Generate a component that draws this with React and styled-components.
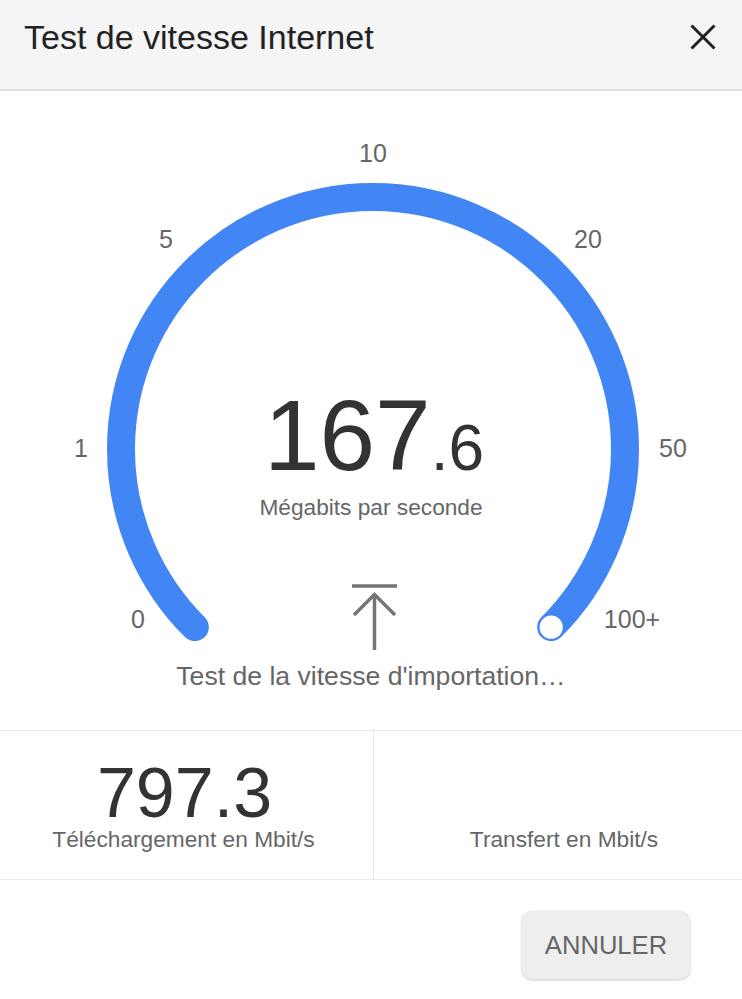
import React from "react";
import styled, { createGlobalStyle } from "styled-components";

const Global = createGlobalStyle`
  html, body { margin: 0; padding: 0; background: #ffffff; }
  body { font-family: "Liberation Sans", Arial, sans-serif; }
`;

const Dialog = styled.div`
  width: 742px;
  background: #ffffff;
  font-family: "Liberation Sans", Arial, sans-serif;
`;

const Header = styled.header`
  box-sizing: border-box;
  height: 91px;
  background: #f5f5f5;
  border-bottom: 2px solid #e2e2e2;
  display: flex;
  align-items: flex-start;
  justify-content: space-between;
  padding: 17px 24px 0 24px;
`;

const Title = styled.h1`
  margin: 0;
  font-size: 34px;
  line-height: 40px;
  font-weight: 400;
  color: #222222;
`;

const CloseButton = styled.button`
  border: none;
  background: transparent;
  padding: 0;
  margin-top: 7px;
  margin-right: 2px;
  width: 26px;
  height: 26px;
  cursor: pointer;
  display: flex;
`;

const GaugeSection = styled.section`
  position: relative;
  display: flex;
  flex-direction: column;
  align-items: center;
  padding-bottom: 39px;
`;

const GaugeSvg = styled.svg`
  display: block;
  width: 742px;
  height: 570px;
`;

const Reading = styled.div`
  position: absolute;
  top: 294px;
  left: 0;
  right: 0;
  display: flex;
  flex-direction: column;
  align-items: center;
`;

const Value = styled.div`
  color: #333333;
  font-size: 100px;
  line-height: 100px;
  height: 100px;
  white-space: nowrap;
  margin-left: 6px;
`;

const Decimal = styled.span`
  font-size: 64px;
`;

const Unit = styled.div`
  margin-top: 9px;
  font-size: 22.7px;
  line-height: 26px;
  color: #666666;
`;

const Status = styled.div`
  font-size: 26.6px;
  line-height: 30px;
  color: #666666;
`;

const Stats = styled.div`
  display: grid;
  grid-template-columns: 373px 1fr;
  border-top: 1px solid #e8e8e8;
  border-bottom: 1px solid #e8e8e8;
`;

const StatCell = styled.div`
  display: flex;
  flex-direction: column;
  align-items: center;
  padding: 32px 0 27px 0;
  border-left: ${(p) => (p.$divider ? "1px solid #e8e8e8" : "none")};
`;

const StatValue = styled.div`
  font-size: 70px;
  line-height: 60px;
  height: 60px;
  color: #333333;
  margin-left: -4px;
`;

const StatLabel = styled.div`
  margin-top: 3px;
  font-size: 22.7px;
  line-height: 26px;
  color: #666666;
  transform: translateX(${(p) => p.$shift || 0}px);
`;

const Footer = styled.footer`
  display: flex;
  justify-content: flex-end;
  padding: 31px 52px 19px 0;
`;

const CancelButton = styled.button`
  width: 168px;
  height: 68px;
  border: none;
  border-radius: 10px;
  background: #eeeeee;
  box-shadow: 0 1px 3px rgba(0, 0, 0, 0.22);
  font-family: "Liberation Sans", Arial, sans-serif;
  font-size: 25.6px;
  color: #666666;
  cursor: pointer;
`;

const BLUE = "#4285f4";
const cx = 373;
const cy = 358;
const r = 252;
const a = r * Math.SQRT1_2;

const labels = [
  { t: "10", x: 373, y: 62 },
  { t: "5", x: 166, y: 148 },
  { t: "20", x: 588, y: 148 },
  { t: "1", x: 81, y: 357 },
  { t: "50", x: 673, y: 357 },
  { t: "0", x: 138, y: 528 },
  { t: "100+", x: 632, y: 528 },
];

export default function App() {
  return (
    <Dialog>
      <Global />
      <Header>
        <Title>Test de vitesse Internet</Title>
        <CloseButton aria-label="Fermer">
          <svg width="26" height="26" viewBox="0 0 26 26">
            <path d="M1.5 1.5 L24.5 24.5 M24.5 1.5 L1.5 24.5" stroke="#222" strokeWidth="3" fill="none" />
          </svg>
        </CloseButton>
      </Header>
      <GaugeSection>
        <GaugeSvg viewBox="0 0 742 570">
          <path
            d={`M ${cx - a} ${cy + a} A ${r} ${r} 0 1 1 ${cx + a} ${cy + a}`}
            stroke={BLUE}
            strokeWidth="28"
            strokeLinecap="round"
            fill="none"
          />
          <circle cx={cx + a} cy={cy + a} r="12.5" fill="#ffffff" stroke={BLUE} strokeWidth="1.8" />
          {labels.map((l) => (
            <text
              key={l.t}
              x={l.x}
              y={l.y}
              textAnchor="middle"
              dominantBaseline="central"
              fontFamily="Liberation Sans, Arial, sans-serif"
              fontSize="25"
              fill="#666666"
            >
              {l.t}
            </text>
          ))}
          <g stroke="#757575" strokeWidth="3.5" fill="none">
            <path d="M352 495 L397 495" />
            <path d="M374.5 503 L374.5 559" />
            <path d="M354 524 L374.5 503.5 L395 524" />
          </g>
        </GaugeSvg>
        <Reading>
          <Value>
            167<Decimal>.6</Decimal>
          </Value>
          <Unit>Mégabits par seconde</Unit>
        </Reading>
        <Status>Test de la vitesse d'importation…</Status>
      </GaugeSection>
      <Stats>
        <StatCell>
          <StatValue>797.3</StatValue>
          <StatLabel $shift={-3}>Téléchargement en Mbit/s</StatLabel>
        </StatCell>
        <StatCell $divider>
          <StatValue />
          <StatLabel $shift={6}>Transfert en Mbit/s</StatLabel>
        </StatCell>
      </Stats>
      <Footer>
        <CancelButton>ANNULER</CancelButton>
      </Footer>
    </Dialog>
  );
}
